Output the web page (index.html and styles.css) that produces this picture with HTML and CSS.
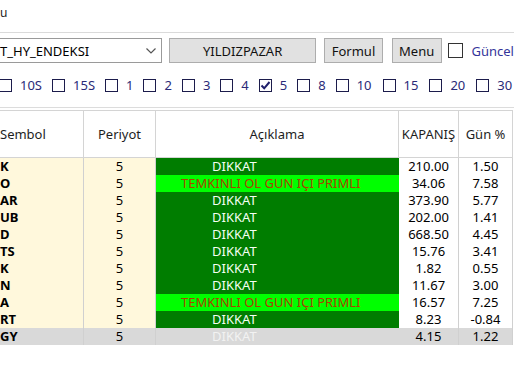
FILE: index.html
```html
<!DOCTYPE html>
<html lang="tr">
<head>
    <meta charset="UTF-8">
    <meta name="viewport" content="width=device-width, initial-scale=1.0">
    <title>Yildiz Pazar Tarama</title>
    <link rel="stylesheet" href="styles.css">
</head>
<body>
    <div class="window">
        <div class="title">u</div>

        <div class="toolbar">
            <div class="combo">
                <span>T_HY_ENDEKSI</span>
                <svg class="chevron" width="10" height="6" viewBox="0 0 10 6">
                    <path d="M0.5 0.5 L5 5 L9.5 0.5" fill="none" stroke="#555" stroke-width="1.2"/>
                </svg>
            </div>
            <button class="btn btn-wide">YILDIZPAZAR</button>
            <button class="btn btn-formul">Formul</button>
            <button class="btn btn-menu">Menu</button>
            <label class="guncel"><span class="big-box"></span>Güncel</label>
        </div>

        <div class="periods">
            <label class="period first"><span class="box"></span>10S</label>
            <label class="period"><span class="box"></span>15S</label>
            <label class="period"><span class="box"></span>1</label>
            <label class="period"><span class="box"></span>2</label>
            <label class="period"><span class="box"></span>3</label>
            <label class="period"><span class="box"></span>4</label>
            <label class="period">
                <span class="box checked">
                    <svg width="11" height="11" viewBox="0 0 11 11">
                        <path d="M1.5 5.5 L4.2 8.3 L9.5 2" fill="none" stroke="#1f1f6b" stroke-width="2"/>
                    </svg>
                </span>5
            </label>
            <label class="period"><span class="box"></span>8</label>
            <label class="period wide"><span class="box"></span>10</label>
            <label class="period wide"><span class="box"></span>15</label>
            <label class="period wide"><span class="box"></span>20</label>
            <label class="period"><span class="box"></span>30</label>
        </div>

        <table class="grid">
            <thead>
                <tr>
                    <th class="c-sym">Sembol</th>
                    <th class="c-per">Periyot</th>
                    <th class="c-desc">Açıklama</th>
                    <th class="c-close">KAPANIŞ</th>
                    <th class="c-day">Gün %</th>
                </tr>
            </thead>
            <tbody>
                <tr>
                    <td class="sym">K</td><td class="per">5</td>
                    <td class="desc dikkat">DIKKAT</td>
                    <td>210.00</td><td>1.50</td>
                </tr>
                <tr>
                    <td class="sym">O</td><td class="per">5</td>
                    <td class="desc temkinli">TEMKINLI OL GUN IÇI PRIMLI</td>
                    <td>34.06</td><td>7.58</td>
                </tr>
                <tr>
                    <td class="sym">AR</td><td class="per">5</td>
                    <td class="desc dikkat">DIKKAT</td>
                    <td>373.90</td><td>5.77</td>
                </tr>
                <tr>
                    <td class="sym">UB</td><td class="per">5</td>
                    <td class="desc dikkat">DIKKAT</td>
                    <td>202.00</td><td>1.41</td>
                </tr>
                <tr>
                    <td class="sym">D</td><td class="per">5</td>
                    <td class="desc dikkat">DIKKAT</td>
                    <td>668.50</td><td>4.45</td>
                </tr>
                <tr>
                    <td class="sym">TS</td><td class="per">5</td>
                    <td class="desc dikkat">DIKKAT</td>
                    <td>15.76</td><td>3.41</td>
                </tr>
                <tr>
                    <td class="sym">K</td><td class="per">5</td>
                    <td class="desc dikkat">DIKKAT</td>
                    <td>1.82</td><td>0.55</td>
                </tr>
                <tr>
                    <td class="sym">N</td><td class="per">5</td>
                    <td class="desc dikkat">DIKKAT</td>
                    <td>11.67</td><td>3.00</td>
                </tr>
                <tr>
                    <td class="sym">A</td><td class="per">5</td>
                    <td class="desc temkinli">TEMKINLI OL GUN IÇI PRIMLI</td>
                    <td>16.57</td><td>7.25</td>
                </tr>
                <tr>
                    <td class="sym">RT</td><td class="per">5</td>
                    <td class="desc dikkat">DIKKAT</td>
                    <td>8.23</td><td>-0.84</td>
                </tr>
                <tr class="selected">
                    <td class="sym">GY</td><td class="per">5</td>
                    <td class="desc dikkat">DIKKAT</td>
                    <td>4.15</td><td>1.22</td>
                </tr>
            </tbody>
        </table>
    </div>
</body>
</html>
```

FILE: styles.css
```css
body {
    margin: 0;
    padding: 0;
    background-color: #fff;
    color: #000;
    font-family: "Noto Sans", "Open Sans", sans-serif;
    font-size: 12px;
}

.window {
    width: 514px;
    height: 386px;
    overflow: hidden;
}

.title {
    box-sizing: border-box;
    height: 33px;
    padding-top: 5px;
    line-height: 16px;
    color: #222;
    border-bottom: 1px solid #dadada;
}

/* top row: combo + buttons */
.toolbar {
    display: flex;
    align-items: center;
    height: 25px;
    margin-top: 5px;
}

.combo {
    box-sizing: border-box;
    width: 163px;
    height: 25px;
    display: flex;
    align-items: center;
    justify-content: space-between;
    padding-right: 5px;
    border: 1px solid #9a9a9a;
    border-left: none;
    background-color: #fff;
    font-size: 13px;
}

.btn {
    box-sizing: border-box;
    height: 25px;
    padding: 0;
    border: 1px solid #adadad;
    background-color: #e1e1e1;
    color: #111;
    font-family: inherit;
    font-size: 13px;
}

.btn-wide {
    width: 148px;
    margin-left: 7px;
}

.btn-formul {
    width: 59px;
    margin-left: 8px;
}

.btn-menu {
    width: 50px;
    margin-left: 9px;
}

.guncel {
    display: flex;
    align-items: center;
    margin-left: 6px;
    color: #34349a;
    font-size: 13px;
}

.big-box {
    box-sizing: border-box;
    width: 15px;
    height: 15px;
    margin-right: 9px;
    border: 1px solid #333;
    background-color: #fff;
}

/* period checkboxes */
.periods {
    display: flex;
    align-items: center;
    gap: 10px;
    height: 44px;
    border-bottom: 1px solid #dcdcdc;
}

.period {
    display: flex;
    align-items: center;
    color: #2a2a78;
    font-size: 13px;
}

.period.first {
    margin-left: -1px;
}

.period.wide {
    margin-right: 1px;
}

.box {
    box-sizing: border-box;
    width: 13px;
    height: 13px;
    margin-right: 8px;
    border: 1px solid #1c1c4c;
    background-color: #fff;
    display: flex;
    align-items: center;
    justify-content: center;
}

/* data grid */
.grid {
    margin-top: 2px;
    border-collapse: separate;
    border-spacing: 0;
    table-layout: fixed;
    width: 513px;
    font-size: 13px;
}

.grid th {
    box-sizing: border-box;
    height: 48px;
    padding: 0;
    font-weight: normal;
    color: #1e1e1e;
    background-color: #fff;
    border-top: 1px solid #d4d4d4;
    border-bottom: 1px solid #d4d4d4;
    border-right: 1px solid #d4d4d4;
    text-align: center;
}

.grid th.c-sym {
    text-align: left;
}

.c-sym { width: 84px; }
.c-per { width: 72px; }
.c-desc { width: 243px; }
.c-close { width: 60px; }
.c-day { width: 54px; }

.grid td {
    box-sizing: border-box;
    height: 17px;
    padding: 0;
    line-height: 17px;
    text-align: center;
    white-space: nowrap;
    overflow: hidden;
    border-right: 1px solid #d0d0d0;
}

.grid td.sym {
    text-align: left;
    font-weight: bold;
    background-color: #fff8dc;
}

.grid td.per {
    background-color: #fff8dc;
}

.grid td.desc {
    text-align: left;
    border-right: none;
}

.dikkat {
    padding-left: 56px !important;
    background-color: #007d00;
    color: #f4fff4;
}

.temkinli {
    padding-left: 25px !important;
    background-color: #00ff00;
    color: #a84400;
}

.grid tr.selected td {
    background-color: #d9d9d9;
}

.grid tr.selected td.desc {
    color: #f2f2f2;
}
```
